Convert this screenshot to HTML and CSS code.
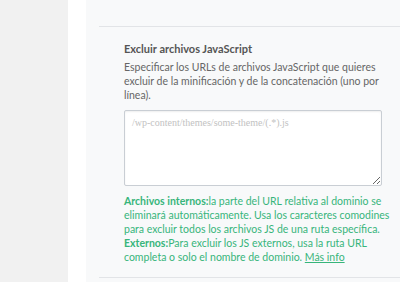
FILE: index.html
```html
<!DOCTYPE html>
<html lang="es">
<head>
  <meta charset="UTF-8" />
  <title>Excluir archivos JavaScript</title>
  <link rel="stylesheet" href="styles.css">
</head>
<body>
  <div class="layout">
    <div class="sidebar"></div>
    <div class="main">
      <div class="section">
        <h3 class="field-title">Excluir archivos JavaScript</h3>
        <p class="field-desc">Especificar los URLs de archivos JavaScript que quieres excluir de la minificación y de la concatenación (uno por línea).</p>
        <textarea class="field-input" placeholder="/wp-content/themes/some-theme/(.*).js"></textarea>
        <p class="field-help"><strong>Archivos internos:</strong>la parte del URL relativa al dominio se eliminará automáticamente. Usa los caracteres comodines para excluir todos los archivos JS de una ruta específica.<br><strong>Externos:</strong>Para excluir los JS externos, usa la ruta URL completa o solo el nombre de dominio. <a href="#">Más info</a></p>
      </div>
    </div>
  </div>
</body>
</html>
```

FILE: styles.css
```css
body {
  margin: 0;
  background: #fff;
  font-family: Lato, sans-serif;
  font-size: 10.5px;
  color: #666;
}
.layout {
  display: flex;
  height: 282px;
  overflow: hidden;
}
.sidebar {
  width: 68px;
  background: #f1f1f1;
}
.main {
  flex: 1;
  margin-left: 18px;
  background: #f8f9fa;
  padding: 26px 0 0 13px;
}
.section {
  border-top: 1px solid #e2e4e7;
  border-bottom: 1px solid #e2e4e7;
  padding: 15px 8px 13px 25px;
}
.field-title {
  margin: 0 0 4px;
  font-size: 11px;
  line-height: 14px;
  font-weight: 700;
  color: #555;
}
.field-desc {
  margin: 0 0 8px;
  line-height: 14px;
  width: 268px;
}
.field-input {
  display: block;
  box-sizing: border-box;
  width: 258px;
  height: 76px;
  margin: 0 0 8px;
  padding: 6px 7px;
  border: 1px solid #c9ced4;
  border-radius: 2px;
  box-shadow: inset 0 1px 2px rgba(0, 0, 0, 0.07);
  background: #fff;
  font-family: "Liberation Serif", serif;
  font-size: 10px;
}
.field-input::placeholder { color: #c2c2c2; }
.field-help {
  margin: 0;
  width: 268px;
  line-height: 14px;
  color: #37b57a;
}
.field-help strong { font-weight: 700; }
.field-help a { color: #37b57a; }
```
